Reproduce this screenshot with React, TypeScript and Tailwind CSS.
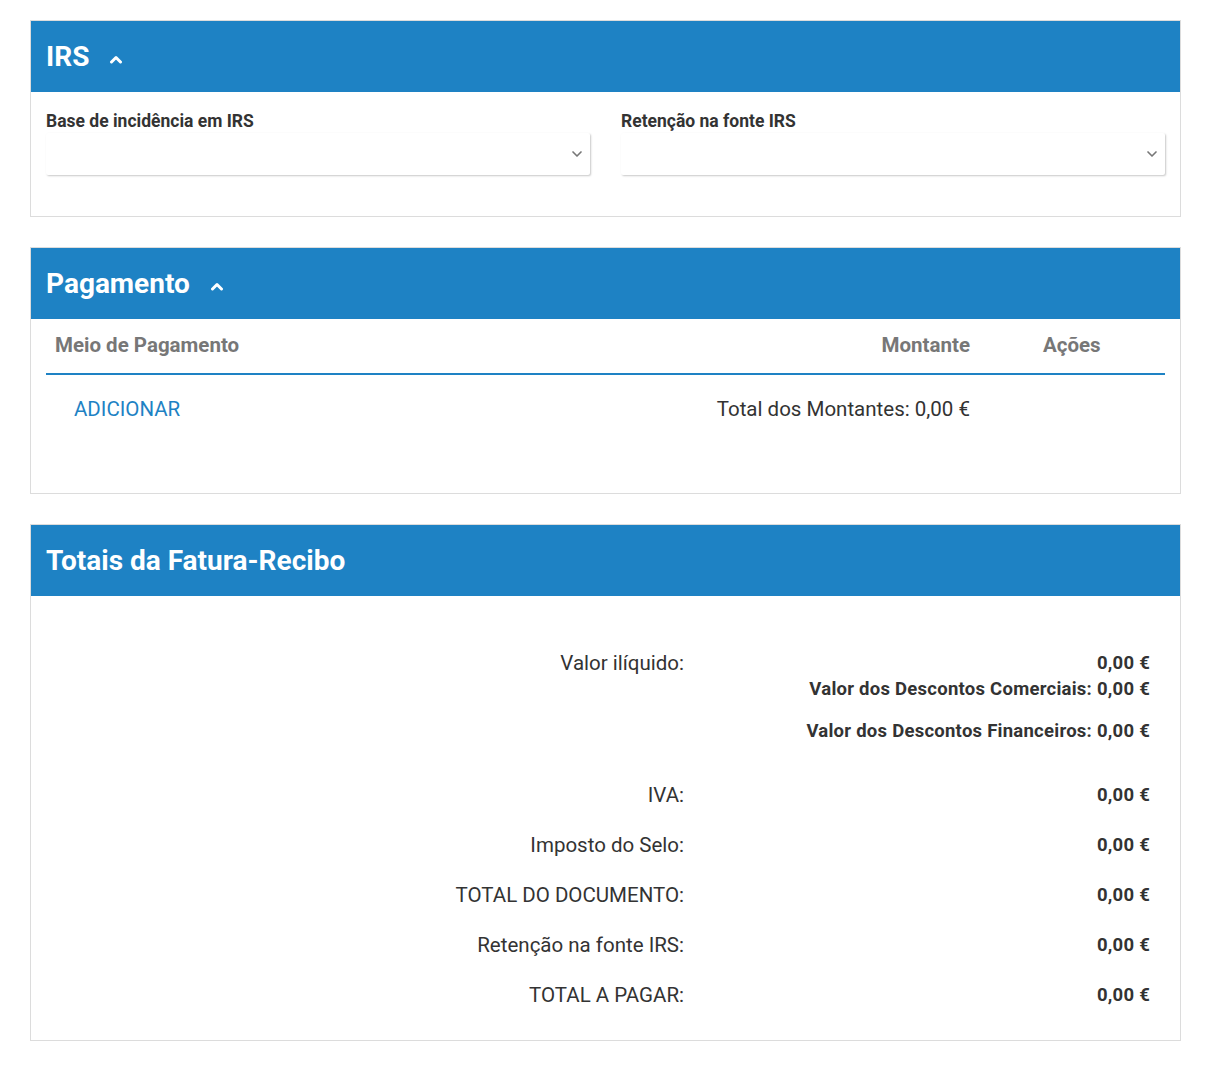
import { ChevronDown } from "lucide-react"

const font = { fontFamily: "Roboto, 'Liberation Sans', sans-serif" }

function ChevronUp() {
  return (
    <svg width="14" height="10" viewBox="0 0 14 10" className="ml-[20px] mt-[4px]">
      <polyline points="2.5,8 7,3.5 11.5,8" fill="none" stroke="white" strokeWidth="3" strokeLinecap="round" strokeLinejoin="round" />
    </svg>
  )
}

function CardHeader({ title, collapsible }: { title: string; collapsible?: boolean }) {
  return (
    <div className="flex h-[71px] items-center bg-[#1e82c4] px-[15px]">
      <h2 className="text-[28px] font-bold leading-none text-white">{title}</h2>
      {collapsible && <ChevronUp />}
    </div>
  )
}

function SelectField({ label }: { label: string }) {
  return (
    <div className="flex flex-1 flex-col">
      <label className="text-[17.5px] font-bold leading-[20px] text-[#333]">{label}</label>
      <div className="mt-[2px] flex h-[42px] items-center justify-end rounded-[2px] bg-white pr-[5px] shadow-[1px_1px_2px_rgba(0,0,0,0.22)]">
        <ChevronDown className="h-[16px] w-[16px] text-[#777]" strokeWidth={2.5} />
      </div>
    </div>
  )
}

const totals = [
  { label: "IVA:", value: "0,00 €" },
  { label: "Imposto do Selo:", value: "0,00 €" },
  { label: "TOTAL DO DOCUMENTO:", value: "0,00 €" },
  { label: "Retenção na fonte IRS:", value: "0,00 €" },
  { label: "TOTAL A PAGAR:", value: "0,00 €" },
]

export default function App() {
  return (
    <div className="min-h-[1084px] bg-white pl-[30px] pt-[20px]" style={font}>
      <div className="flex w-[1151px] flex-col gap-[30px]">
        {/* IRS */}
        <section className="border border-[#dcdcdc] bg-white">
          <CardHeader title="IRS" collapsible />
          <div className="flex gap-[31px] px-[15px] pb-[41px] pt-[19px]">
            <SelectField label="Base de incidência em IRS" />
            <SelectField label="Retenção na fonte IRS" />
          </div>
        </section>

        {/* Pagamento */}
        <section className="border border-[#dcdcdc] bg-white">
          <CardHeader title="Pagamento" collapsible />
          <div className="px-[15px] pb-[50px]">
            <div className="flex h-[56px] items-start border-b-2 border-[#1e82c4] pt-[14px] text-[20.5px] font-bold leading-[24px] text-[#777]">
              <div className="flex-1 pl-[9px]">Meio de Pagamento</div>
              <div className="text-right">Montante</div>
              <div className="w-[195px] pl-[73px]">Ações</div>
            </div>
            <div className="flex h-[68px] items-center text-[20.5px]">
              <button className="flex-1 pl-[28px] text-left text-[#1e82c4]">ADICIONAR</button>
              <div className="text-right text-[#333]">Total dos Montantes: 0,00 €</div>
              <div className="w-[195px]" />
            </div>
          </div>
        </section>

        {/* Totais */}
        <section className="border border-[#dcdcdc] bg-white">
          <CardHeader title="Totais da Fatura-Recibo" />
          <div className="pb-[33px] pl-[15px] pr-[30px] pt-[55px]">
            <div className="flex items-start">
              <div className="w-[638px] text-right text-[20.5px] leading-[24px] text-[#333]">Valor ilíquido:</div>
              <div className="flex flex-1 flex-col items-end text-[18.5px] font-bold leading-[24px] tracking-[0.25px] text-[#333]">
                <div>0,00 €</div>
                <div className="mt-[2px]">Valor dos Descontos Comerciais: 0,00 €</div>
                <div className="mt-[18px]">Valor dos Descontos Financeiros: 0,00 €</div>
              </div>
            </div>
            {totals.map((t, i) => (
              <div key={t.label} className={`flex items-center ${i === 0 ? "mt-[40px]" : "mt-[26px]"}`}>
                <div className="w-[638px] text-right text-[20.5px] leading-[24px] text-[#333]">{t.label}</div>
                <div className="flex-1 text-right text-[18.5px] font-bold leading-[24px] tracking-[0.25px] text-[#333]">{t.value}</div>
              </div>
            ))}
          </div>
        </section>
      </div>
    </div>
  )
}
